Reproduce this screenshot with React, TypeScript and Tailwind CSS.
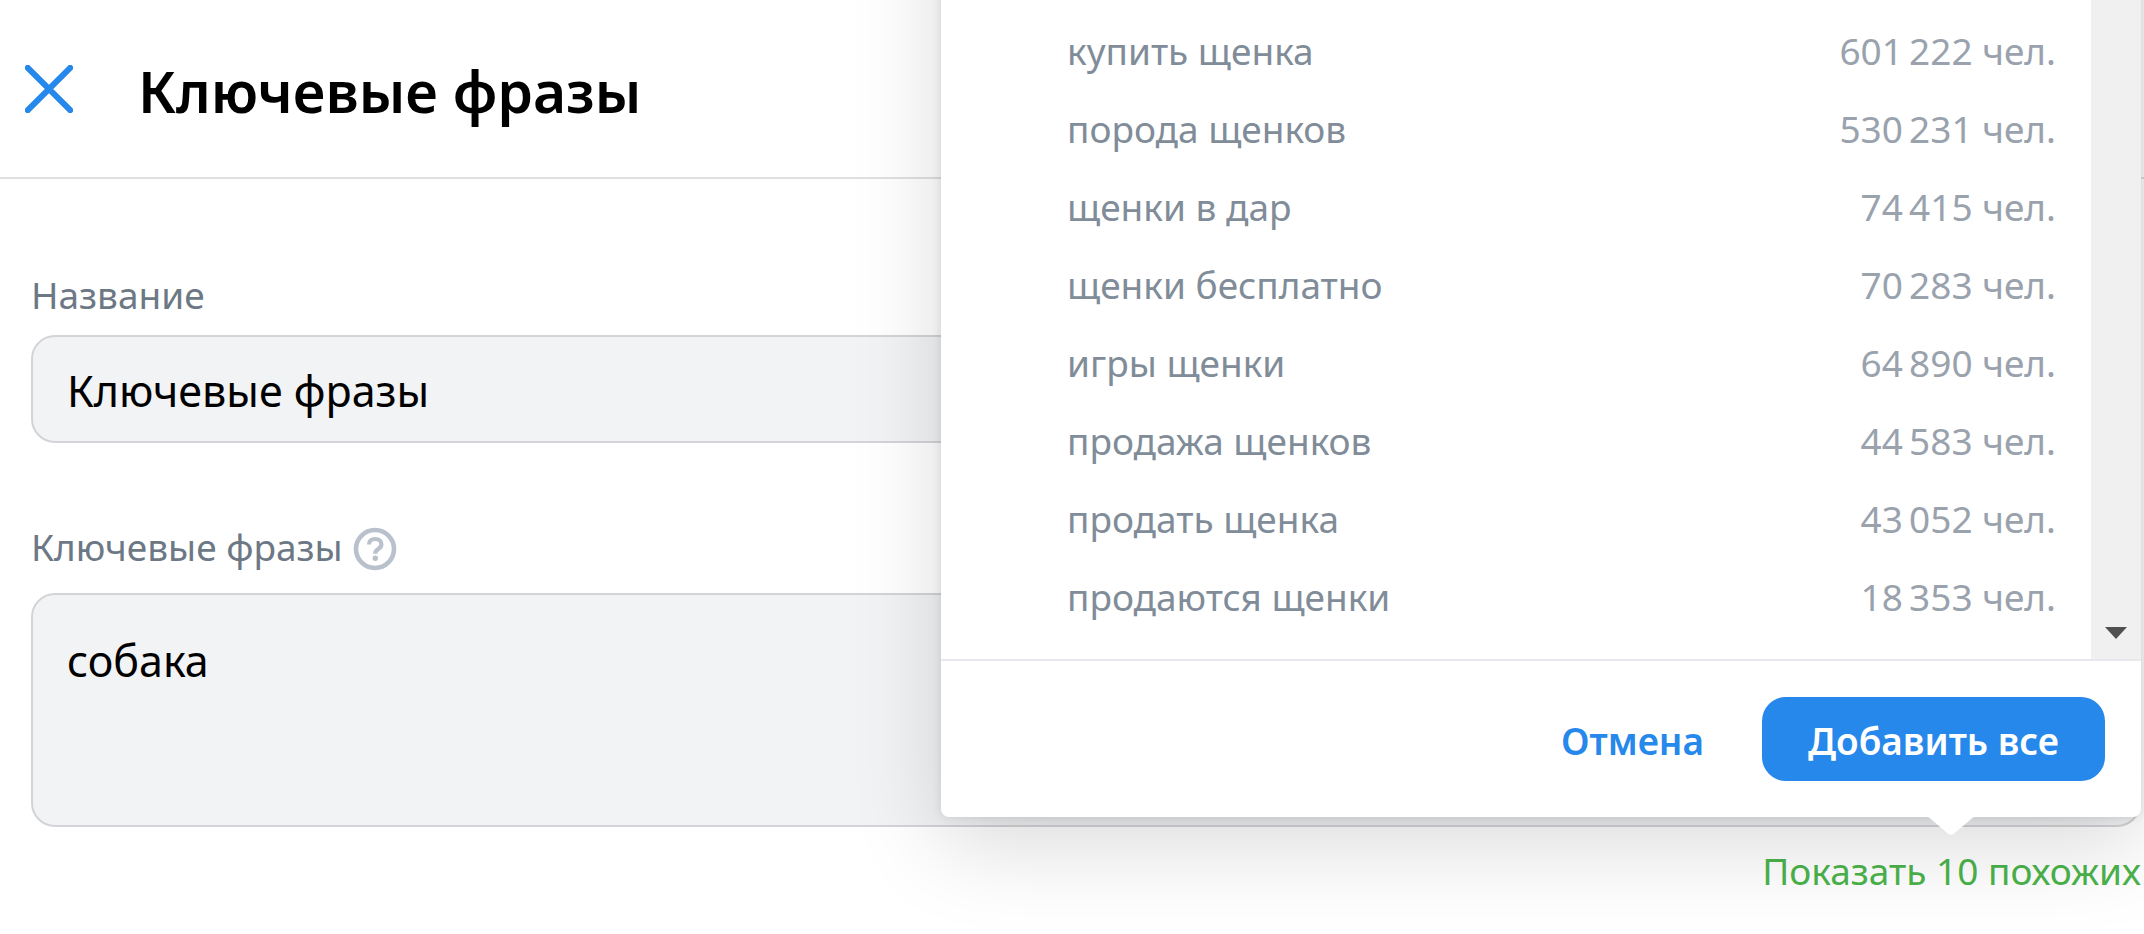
const phrases = [
  { name: 'купить щенка', count: '601\u2009222 чел.' },
  { name: 'порода щенков', count: '530\u2009231 чел.' },
  { name: 'щенки в дар', count: '74\u2009415 чел.' },
  { name: 'щенки бесплатно', count: '70\u2009283 чел.' },
  { name: 'игры щенки', count: '64\u2009890 чел.' },
  { name: 'продажа щенков', count: '44\u2009583 чел.' },
  { name: 'продать щенка', count: '43\u2009052 чел.' },
  { name: 'продаются щенки', count: '18\u2009353 чел.' },
];

function Header() {
  return (
    <header className="flex h-[179px] items-center gap-[65px] border-b-2 border-[#dfe0e2] pl-[25px]">
      <button type="button" aria-label="Закрыть" className="shrink-0">
        <svg width="48" height="48" viewBox="0 0 48 48" fill="none" stroke="#2688eb" strokeWidth="6" strokeLinecap="round" className="block">
          <path d="M2.8 2.8 45.2 45.2M45.2 2.8 2.8 45.2" />
        </svg>
      </button>
      <h1 className="pt-1 text-[57px] leading-[80px] font-semibold text-black">Ключевые фразы</h1>
    </header>
  );
}

function HelpIcon() {
  return (
    <svg width="44" height="44" viewBox="0 0 44 44" fill="none" stroke="#b8c1cc" className="mt-1 block">
      <circle cx="22" cy="22" r="19" strokeWidth="4.6" />
      <path d="M16 17.400c0-3.500 2.600-5.400 6.200-5.400s6.200 2 6.200 5.200c0 2.400-1.200 3.600-3.200 4.900-2 1.200-2.900 2-2.900 4.100v.6" strokeWidth="4.200" />
      <circle cx="22.3" cy="31.2" r="2.700" fill="#b8c1cc" stroke="none" />
    </svg>
  );
}

function SimilarPopover() {
  return (
    <section
      aria-label="Похожие фразы"
      className="absolute right-0 bottom-full mb-[26px] w-[1200px] rounded-[8px] bg-white shadow-[0_28px_90px_rgba(0,0,0,0.15),0_0_10px_rgba(0,0,0,0.11)]"
    >
      <div className="flex">
        <div className="flex-1 pt-48 pr-[35px] pb-[23px] pl-[126px]">
          <table className="w-full text-[37px] leading-[78px]">
            <tbody>
              {phrases.map((p) => (
                <tr key={p.name}>
                  <td className="p-0 text-left text-[#818c99]">{p.name}</td>
                  <td className="p-0 text-right text-[#99a2ad]">{p.count}</td>
                </tr>
              ))}
            </tbody>
          </table>
        </div>
        <div className="flex w-[50px] items-end justify-center bg-[#f0f0f0] pb-5">
          <button type="button" aria-label="Прокрутить вниз">
            <svg width="22" height="12" viewBox="0 0 22 12" fill="#505050" className="block">
              <path d="M0 0h22L11 12z" />
            </svg>
          </button>
        </div>
      </div>
      <footer className="flex items-center justify-end gap-[58px] border-t-2 border-[#e7e8ec] px-9 py-9 text-[37px] font-semibold">
        <button type="button" className="pt-1 text-[#2688eb]">Отмена</button>
        <button type="button" className="h-[84px] rounded-[24px] bg-[#2688eb] px-[46px] pt-1 text-white">Добавить все</button>
      </footer>
      <svg width="48" height="18" viewBox="0 0 48 18" fill="#fff" className="absolute top-full right-[166px]">
        <path d="M0 0h48c-1.500.2-2.500.8-3.500 1.700L27.500 16.300c-2.300 2-4.700 2-7 0L3.500 1.700C2.500.8 1.500.2 0 0z" />
      </svg>
    </section>
  );
}

export default function App() {
  return (
    <div className="min-h-screen overflow-hidden bg-white font-['Noto_Sans','Open_Sans',sans-serif]">
      <Header />
      <main className="pt-[88px] pr-[3px] pl-[31px]">
        <label htmlFor="name" className="block text-[37px] leading-[56px] text-[#6d7885]">Название</label>
        <input
          id="name"
          type="text"
          defaultValue="Ключевые фразы"
          className="mt-3 block h-[108px] w-full rounded-[24px] border-2 border-[#d3d4d7] bg-[#f2f3f5] px-[34px] pt-[2px] text-[43px] text-black outline-none"
        />
        <div className="mt-[76px] flex h-[56px] items-center gap-[10px]">
          <label htmlFor="phrases" className="text-[37px] leading-[56px] text-[#6d7885]">Ключевые фразы</label>
          <button type="button" aria-label="Подсказка">
            <HelpIcon />
          </button>
        </div>
        <textarea
          id="phrases"
          defaultValue="собака"
          className="mt-[18px] block h-[234px] w-full resize-none rounded-[24px] border-2 border-[#d3d4d7] bg-[#f2f3f5] px-[34px] py-[36px] text-[43px] leading-[60px] text-black outline-none"
        />
        <div className="relative mt-4 flex justify-end">
          <a href="#similar" className="text-[37px] leading-[56px] text-[#4bb34b]">Показать 10 похожих</a>
          <SimilarPopover />
        </div>
      </main>
    </div>
  );
}
